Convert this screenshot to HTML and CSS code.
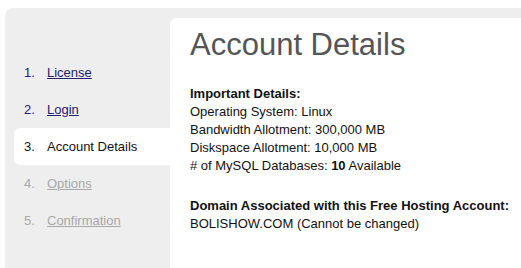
FILE: index.html
```html
<!DOCTYPE html>
<html lang="en">
<head>
    <meta charset="UTF-8">
    <title>Free Hosting Signup - Account Details</title>
    <link rel="stylesheet" href="styles.css">
</head>
<body>
    <div class="wizard">
        <ul class="steps">
            <li class="step done"><span class="num">1.</span><a href="#">License</a></li>
            <li class="step done"><span class="num">2.</span><a href="#">Login</a></li>
            <li class="step current"><span class="num">3.</span>Account Details</li>
            <li class="step todo"><span class="num">4.</span><a href="#">Options</a></li>
            <li class="step todo"><span class="num">5.</span><a href="#">Confirmation</a></li>
        </ul>

        <div class="content">
            <h1>Account Details</h1>

            <p>
                <strong>Important Details:</strong><br>
                Operating System: Linux<br>
                Bandwidth Allotment: 300,000 MB<br>
                Diskspace Allotment: 10,000 MB<br>
                # of MySQL Databases: <strong>10</strong> Available
            </p>

            <p>
                <strong>Domain Associated with this Free Hosting Account:</strong><br>
                BOLISHOW.COM (Cannot be changed)
            </p>
        </div>
    </div>
</body>
</html>
```

FILE: styles.css
```css
* {
    margin: 0;
    padding: 0;
    box-sizing: border-box;
}

body {
    font-family: 'Liberation Sans', Arial, sans-serif;
    font-size: 13px;
    color: #111;
    background: #fff;
}

.wizard {
    display: flex;
    margin: 8px 0 0 5px;
    min-height: 260px;
    background: #eeeeee;
    border-radius: 8px 0 0 0;
}

/* left column with the numbered steps */
.steps {
    list-style: none;
    width: 165px;
    padding: 46px 0 0 9px;
}

.step {
    display: flex;
    align-items: center;
    height: 37px;
    padding-left: 10px;
    border-radius: 6px 0 0 6px;
}

.num {
    width: 23px;
}

.step.done,
.step.done a {
    color: #21216e;
}

.step.current {
    background: #fff;
    color: #111;
}

.step.todo,
.step.todo a {
    color: #a8a8a8;
}

/* main white panel */
.content {
    flex: 1;
    margin-top: 10px;
    padding: 9px 0 0 20px;
    background: #fff;
    border-radius: 6px 0 0 0;
}

h1 {
    font-size: 31px;
    font-weight: normal;
    color: #555;
    line-height: 36px;
    margin-bottom: 22px;
}

.content p {
    line-height: 18px;
    margin-bottom: 22px;
}
```
